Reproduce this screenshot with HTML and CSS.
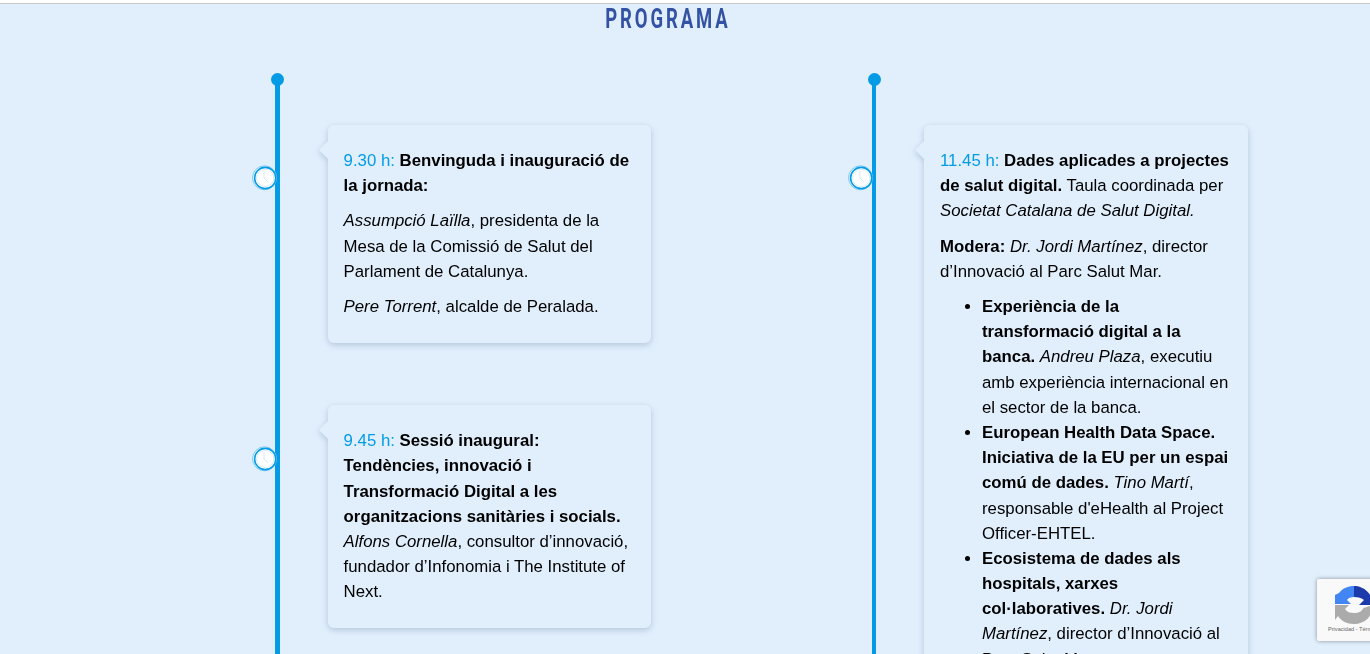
FILE: index.html
```html
<!DOCTYPE html>
<html lang="ca">
<head>
  <meta charset="UTF-8" />
  <meta name="viewport" content="width=device-width, initial-scale=1.0"/>
  <title>Programa</title>
  <link rel="stylesheet" href="styles.css">
</head>
<body>
  <div class="page">
    <h2 class="title"><span>PROGRAMA</span></h2>

    <div class="columns">
      <div class="timeline">
        <div class="item">
          <svg class="clock" viewBox="0 0 26 26"><circle cx="12.500" cy="12.800" r="12" class="ring-thin"/><circle cx="13.200" cy="13" r="10.600" class="ring"/><circle cx="13.200" cy="13" r="8.600" class="inner"/><path d="M12 6v7l4 4" class="hands"/></svg>
          <div class="card">
            <p><span class="time">9.30 h:</span> <b>Benvinguda i inauguració de la jornada:</b></p>
            <p><i>Assumpció Laïlla</i>, presidenta de la Mesa de la Comissió de Salut del Parlament de Catalunya.</p>
            <p><i>Pere Torrent</i>, alcalde de Peralada.</p>
          </div>
        </div>
        <div class="item">
          <svg class="clock" viewBox="0 0 26 26"><circle cx="12.500" cy="12.800" r="12" class="ring-thin"/><circle cx="13.200" cy="13" r="10.600" class="ring"/><circle cx="13.200" cy="13" r="8.600" class="inner"/><path d="M12 6v7l4 4" class="hands"/></svg>
          <div class="card">
            <p><span class="time">9.45 h:</span> <b>Sessió inaugural: Tendències, innovació i Transformació Digital a les organitzacions sanitàries i socials.</b> <i>Alfons Cornella</i>, consultor d’innovació, fundador d’Infonomia i The Institute of Next.</p>
          </div>
        </div>
      </div>

      <div class="timeline timeline-right">
        <div class="item">
          <svg class="clock" viewBox="0 0 26 26"><circle cx="12.500" cy="12.800" r="12" class="ring-thin"/><circle cx="13.200" cy="13" r="10.600" class="ring"/><circle cx="13.200" cy="13" r="8.600" class="inner"/><path d="M12 6v7l4 4" class="hands"/></svg>
          <div class="card">
            <p><span class="time">11.45 h:</span> <b>Dades aplicades a projectes de salut digital.</b> Taula coordinada per <i>Societat Catalana de Salut Digital.</i></p>
            <p><b>Modera:</b> <i>Dr. Jordi Martínez</i>, director d’Innovació al Parc Salut Mar.</p>
            <ul>
              <li><b>Experiència de la transformació digital a la banca.</b> <i>Andreu Plaza</i>, executiu amb experiència internacional en el sector de la banca.</li>
              <li><b>European Health Data Space. Iniciativa de la EU per un espai comú de dades.</b> <i>Tino Martí</i>, responsable d'eHealth al Project Officer-EHTEL.</li>
              <li><b>Ecosistema de dades als hospitals, xarxes col·laboratives.</b> <i>Dr. Jordi Martínez</i>, director d’Innovació al Parc Salut Mar.</li>
            </ul>
          </div>
        </div>
      </div>
    </div>

    <div class="recaptcha">
      <svg class="recaptcha-logo" viewBox="0 0 40 40">
        <path d="M20 1C30 1 39 9 39 20H25L30 15C28 13 24 12 20 12Z" fill="#1c3aa9"/>
        <path d="M20 1V12C17 12 14 13 13 15L17 19H1V10L5 8C9 3 14 1 20 1Z" fill="#4285f4"/>
        <path d="M1 20H15L11 24C13 27 16 28 20 28C25 28 28 26 29.500 23L39 20C39 31 31 39 20 39C13 39 7 36 4 31L1 35Z" fill="#ababab"/>
      </svg>
      <span class="recaptcha-text">Privacidad - Términos</span>
    </div>
  </div>
</body>
</html>
```

FILE: styles.css
```css
html, body {
  margin: 0;
  height: 100%;
  overflow: hidden;
}

body {
  font-family: "Liberation Sans", Arial, sans-serif;
  font-size: 16.8px;
  line-height: 1.5;
  color: #000;
  background: #fff;
}

.page {
  height: 651px;
  margin-top: 3px;
  border-top: 1px solid #c9c9c9;
  background: #e1effd;
  overflow: hidden;
}

.title {
  margin: 0;
  height: 74px;
  padding-right: 34px;
  text-align: center;
  font-size: 28px;
  line-height: 30px;
  font-weight: 700;
  color: #3452a3;
}

.title span {
  display: inline-block;
  font-family: "Liberation Sans Narrow", "Roboto", sans-serif;
  letter-spacing: 4.400px;
  transform: scaleX(.66);
}

.columns {
  display: grid;
  grid-template-columns: 597px 500px;
  padding-left: 274.600px;
}

.timeline {
  position: relative;
  border-left: 5px solid #039be5;
  padding: 47px 0 0 48px;
  height: 700px;
}

.timeline::before {
  content: "";
  position: absolute;
  left: -9px;
  top: -5px;
  width: 13px;
  height: 13px;
  border-radius: 50%;
  background: #039be5;
}

.timeline-right {
  border-left-width: 4px;
  padding-left: 48.400px;
}

.timeline-right::before {
  left: -8px;
}

.item {
  position: relative;
  margin-bottom: 62.400px;
}

.clock {
  position: absolute;
  left: -76px;
  top: 40.400px;
  width: 26px;
  height: 26px;
  overflow: visible;
}

.ring {
  fill: #fff;
  stroke: #039be5;
  stroke-width: 1.600;
}

.ring-thin {
  fill: #f2f9fe;
  stroke: #7cc8f0;
  stroke-width: 1;
}

.inner {
  fill: #fff;
  stroke: #d8ebfa;
  stroke-width: 1;
}

.hands {
  fill: none;
  stroke: #d5e6f5;
  stroke-width: 1;
}

.card {
  position: relative;
  width: 323.600px;
  box-sizing: border-box;
  padding: 23.100px 16px 13.600px;
  border-radius: 6px;
  background: #e1effd;
  filter: drop-shadow(0 2px 3px rgba(60, 90, 130, .28));
}

.card::before {
  content: "";
  position: absolute;
  left: -9px;
  top: 16px;
  border-style: solid;
  border-width: 9px 9px 9px 0;
  border-color: transparent #e1effd transparent transparent;
}

.card p {
  margin: 0 0 10px;
}

.card ul {
  margin: 0;
  padding-left: 42px;
}

.time {
  color: #039be5;
}

.recaptcha {
  position: absolute;
  left: 1317px;
  top: 579px;
  width: 70px;
  height: 62px;
  box-sizing: border-box;
  padding-top: 6px;
  border-radius: 2px;
  background: #f9f9f9;
  box-shadow: 0 0 4px rgba(0, 0, 0, .4);
  overflow: hidden;
}

.recaptcha-logo {
  display: block;
  width: 40px;
  height: 40px;
  margin-left: 16.500px;
}

.recaptcha-text {
  display: block;
  font-size: 5.600px;
  line-height: 9px;
  color: #666;
  white-space: nowrap;
  padding-left: 11px;
}
```
